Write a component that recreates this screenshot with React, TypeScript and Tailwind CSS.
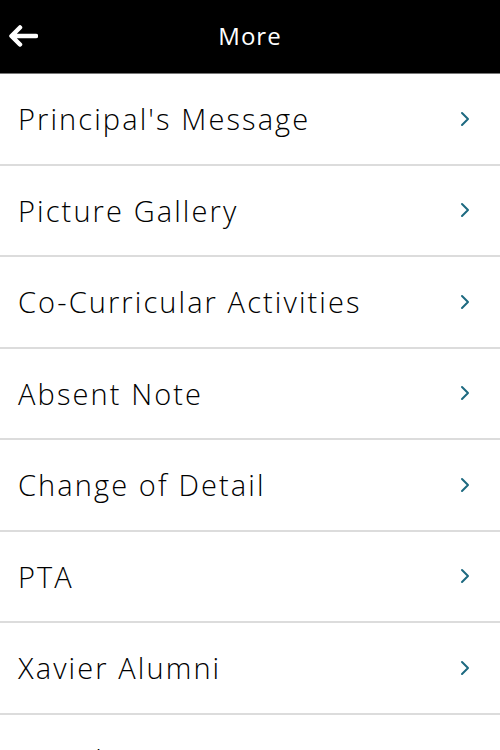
const items = [
  "Principal's Message",
  "Picture Gallery",
  "Co-Curricular Activities",
  "Absent Note",
  "Change of Detail",
  "PTA",
  "Xavier Alumni",
  "Circulars",
];

const Chevron = () => (
  <svg width="10" height="16" viewBox="0 0 10 16" fill="none">
    <path d="M2 2l6 6-6 6" stroke="#1d6a80" strokeWidth="2" strokeLinecap="round" strokeLinejoin="round" />
  </svg>
);

export default function App() {
  return (
    <div className="w-[500px] h-[750px] overflow-hidden bg-white font-['Open_Sans',sans-serif]">
      <div className="h-[74px] bg-black border-b border-[#777] flex items-center relative">
        <svg className="absolute left-[8px] top-[25px]" width="30" height="22" viewBox="0 0 30 22" fill="none">
          <path d="M28 11H4M12 2.5L3.5 11l8.5 8.5" stroke="white" strokeWidth="4.5" strokeLinecap="round" strokeLinejoin="round" />
        </svg>
        <div className="w-full text-center text-white text-[24px] tracking-[1px] pb-[2px]">More</div>
      </div>
      {items.map((item) => (
        <div key={item} className="h-[91.5px] border-b-2 border-[#dcdcdc] flex items-center justify-between pl-[18px] pr-[30px]">
          <span className="text-[29px] font-light text-black tracking-[2.1px]">{item}</span>
          <Chevron />
        </div>
      ))}
    </div>
  );
}
